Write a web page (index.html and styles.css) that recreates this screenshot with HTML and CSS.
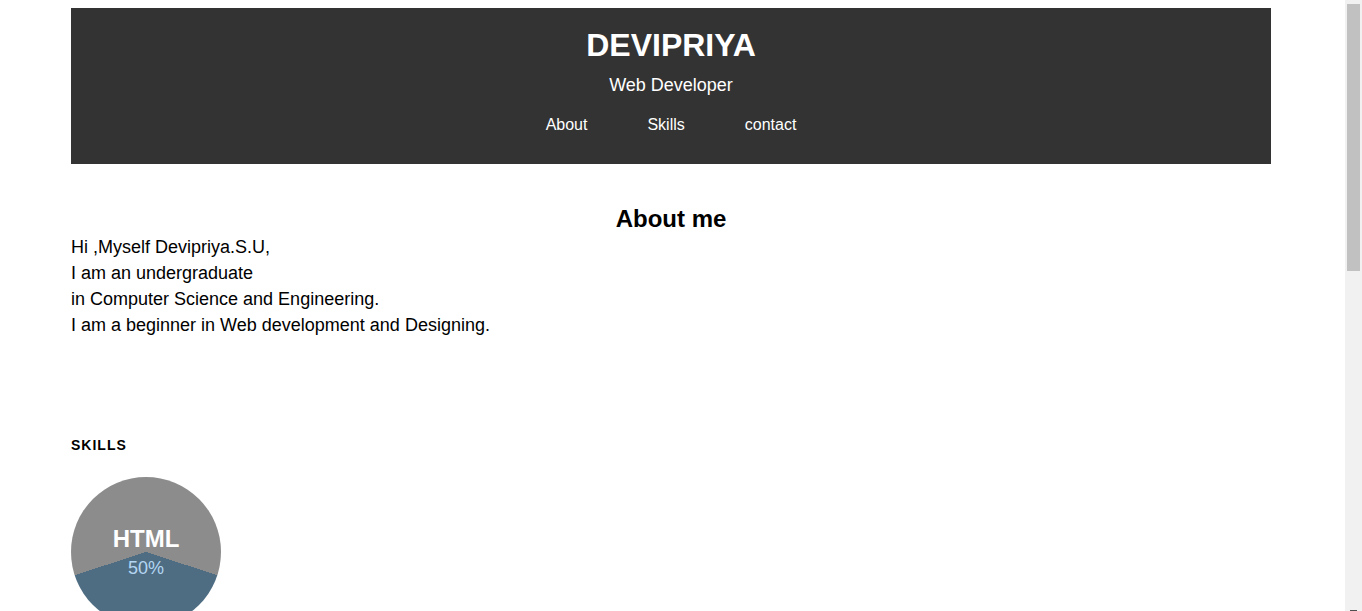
FILE: index.html
```html
<!DOCTYPE html>
<html>
<head>
<meta charset="utf-8">
<title>Devipriya</title>
<link rel="stylesheet" href="styles.css">
</head>
<body>
<div class="page">
  <header class="header">
    <h1 class="name">DEVIPRIYA</h1>
    <p class="role">Web Developer</p>
    <nav class="nav">
      <a href="#about">About</a>
      <a href="#skills">Skills</a>
      <a href="#contact">contact</a>
    </nav>
  </header>
  <section class="about" id="about">
    <h2 class="about-title">About me</h2>
    <p class="about-text">Hi ,Myself Devipriya.S.U,<br>I am an undergraduate<br>in Computer Science and Engineering.<br>I am a beginner in Web development and Designing.</p>
  </section>
  <section class="skills" id="skills">
    <h3 class="skills-title">SKILLS</h3>
    <div class="pie">
      <span class="pie-label">HTML</span>
      <span class="pie-value">50%</span>
    </div>
  </section>
</div>
<div class="scrollbar">
  <div class="scrollbar-thumb"></div>
  <div class="scrollbar-arrow"></div>
</div>
</body>
</html>
```
FILE: styles.css
```css
html, body {
  margin: 0;
  padding: 0;
}
body {
  font-family: "Liberation Sans", Arial, sans-serif;
  color: #000;
  background: #fff;
}
.page {
  width: 1200px;
  margin: 8px 0 0 71px;
  padding-bottom: 40px;
}
.header {
  background: #333333;
  color: #fff;
  text-align: center;
  padding: 19px 0 30px;
}
.name {
  margin: 0;
  font-size: 32px;
  font-weight: bold;
  line-height: 37px;
}
.role {
  margin: 11px 0 0;
  font-size: 18px;
  line-height: 21px;
}
.nav {
  display: flex;
  justify-content: center;
  gap: 60px;
  margin-top: 20px;
}
.nav a {
  color: #fff;
  text-decoration: none;
  font-size: 16px;
  line-height: 18px;
}
.about {
  padding-top: 41px;
}
.about-title {
  margin: 0;
  text-align: center;
  font-size: 24px;
  line-height: 28px;
}
.about-text {
  margin: 1px 0 0;
  font-size: 18px;
  line-height: 26px;
}
.skills {
  padding-top: 99px;
}
.skills-title {
  margin: 0;
  font-size: 14px;
  letter-spacing: 1px;
  line-height: 16px;
}
.pie {
  margin-top: 24px;
  width: 150px;
  height: 150px;
  border-radius: 50%;
  background: conic-gradient(#8c8c8c 0deg 108deg, #4f6d82 108deg 252deg, #8c8c8c 252deg 360deg);
  display: flex;
  flex-direction: column;
  align-items: center;
  padding-top: 48px;
  box-sizing: border-box;
}
.pie-label {
  color: #fff;
  font-weight: bold;
  font-size: 24px;
  line-height: 28px;
}
.pie-value {
  color: #b3d6f2;
  font-size: 18px;
  line-height: 21px;
  margin-top: 5px;
}
.scrollbar {
  position: fixed;
  top: 0;
  right: 0;
  width: 17px;
  height: 100%;
  background: #f1f1f1;
  display: flex;
  flex-direction: column;
  justify-content: space-between;
}
.scrollbar-thumb {
  margin: 4px 0 0 2px;
  width: 13px;
  height: 267px;
  background: #c1c1c1;
}
.scrollbar-arrow {
  margin-left: 5px;
  width: 7px;
  height: 1px;
  background: #505050;
}
```
